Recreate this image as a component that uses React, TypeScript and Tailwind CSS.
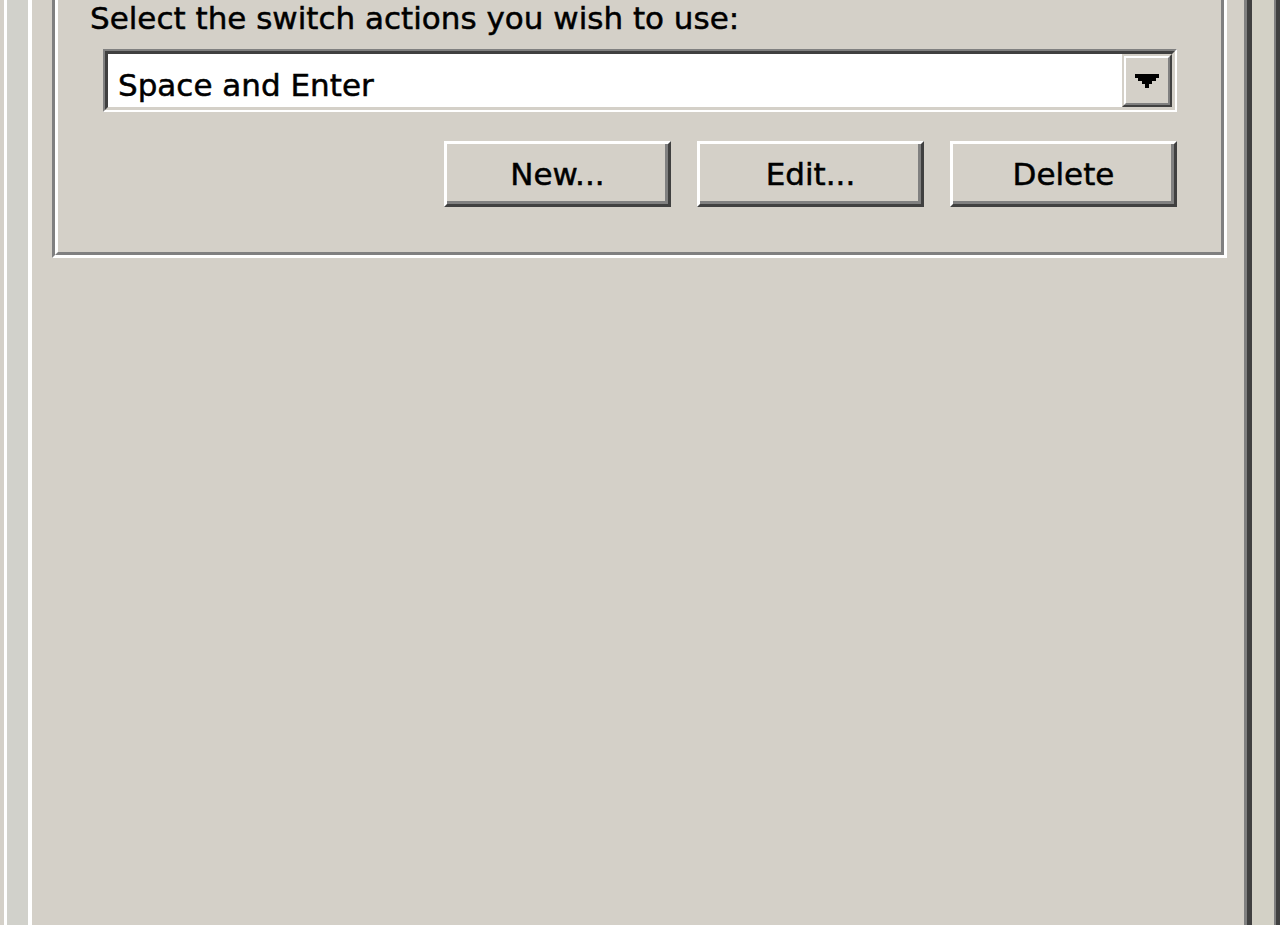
import React from 'react';

function PushButton({ label }: { label: string }) {
  return (
    <div className="w-[227px] h-[66px] border-[3px] border-t-white border-l-white border-b-[#404040] border-r-[#404040]">
      <div className="h-full border-b-[3px] border-r-[3px] border-[#808080] flex items-center justify-center pl-[3px] pt-[2px] text-[31px] leading-[36px] text-black [-webkit-text-stroke:0.5px_#000]">
        {label}
      </div>
    </div>
  );
}

function ComboBox({ value }: { value: string }) {
  return (
    <div className="h-[63px] border-2 border-t-[#808080] border-l-[#808080] border-b-white border-r-white">
      <div className="h-full border-[3px] border-t-[#404040] border-l-[#404040] border-b-[#d4d0c8] border-r-[#d4d0c8] bg-white flex">
        <div className="flex-1 pl-[10px] pt-[13px] text-[31px] leading-[36px] text-black [-webkit-text-stroke:0.5px_#000]">{value}</div>
        <div className="w-[50px] h-full border-2 border-t-[#d4d0c8] border-l-[#d4d0c8] border-b-[#404040] border-r-[#404040]">
          <div className="h-full border-2 border-t-white border-l-white border-b-[#808080] border-r-[#808080] bg-[#d4d0c8] flex items-center justify-center">
            <svg width="24" height="14" viewBox="0 0 7 4" shapeRendering="crispEdges">
              <path d="M0 0h7v1h-1v1h-1v1h-1v1h-1v-1h-1v-1h-1v-1h-1z" fill="#000" />
            </svg>
          </div>
        </div>
      </div>
    </div>
  );
}

export default function App() {
  return (
    <div className="w-[1280px] h-[925px] overflow-hidden bg-[#d4d0c8] flex font-['DejaVu_Sans',sans-serif]">
      {/* window frame, left */}
      <div className="w-[4px] flex-shrink-0" />
      <div className="w-[3px] flex-shrink-0 bg-white" />
      <div className="w-[21px] flex-shrink-0 bg-[#d1d1cb]" />

      {/* property page */}
      <div className="flex-1 flex border-l-[4px] border-l-white border-r-[5px] border-r-[#404040]">
        <div className="flex-1 border-r-[3px] border-r-[#808080] pl-[20px] pr-[17px]">

          {/* group box (top edge scrolled off) */}
          <div className="border-l-[3px] border-l-[#808080] border-b-[3px] border-b-white border-r-[3px] border-r-white">
            <div className="border-l-[3px] border-l-white border-b-[3px] border-b-[#808080] border-r-[3px] border-r-[#808080] pl-[45px] pr-[44px] pb-[45px]">
              <div className="-ml-[13px] pt-[1px] text-[31px] leading-[34px] text-black [-webkit-text-stroke:0.5px_#000]">
                Select the switch actions you wish to use:
              </div>
              <div className="mt-[14px]">
                <ComboBox value="Space and Enter" />
              </div>
              <div className="mt-[29px] flex justify-end gap-[26px]">
                <PushButton label="New..." />
                <PushButton label="Edit..." />
                <PushButton label="Delete" />
              </div>
            </div>
          </div>

        </div>
      </div>

      {/* window frame, right */}
      <div className="w-[22px] flex-shrink-0 bg-[#d3d1c6]" />
      <div className="w-[2px] flex-shrink-0 bg-[#808080]" />
      <div className="w-[4px] flex-shrink-0 bg-[#404040]" />
    </div>
  );
}
